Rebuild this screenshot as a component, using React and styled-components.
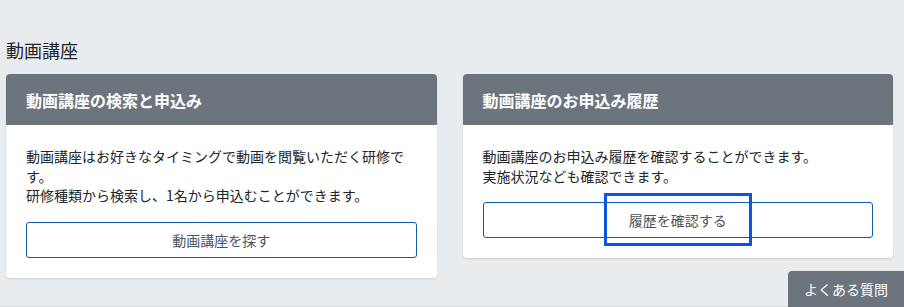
import React from 'react';
import styled, { createGlobalStyle } from 'styled-components';

const GlobalStyle = createGlobalStyle`
  html, body {
    margin: 0;
    padding: 0;
    background: #e9ecef;
  }
  body {
    font-family: 'Noto Sans CJK JP', 'Noto Sans', sans-serif;
    color: #212529;
  }
`;

const Page = styled.div`
  box-sizing: border-box;
  width: 904px;
  min-height: 307px;
  padding: 38px 11px 0 6px;
  border-bottom: 1px solid #d9dde1;
`;

const Heading = styled.h2`
  margin: 0 0 12px;
  font-size: 18px;
  font-weight: 400;
  line-height: 24px;
  color: #212529;
`;

const Cards = styled.div`
  display: grid;
  grid-template-columns: 1fr 1fr;
  column-gap: 26px;
  align-items: start;
`;

const Card = styled.section`
  background: #fff;
  border-radius: 4px;
  box-shadow: 0 1px 2px rgba(0, 0, 0, 0.12);
  overflow: hidden;
`;

const CardHeader = styled.div`
  display: flex;
  align-items: center;
  height: 51px;
  padding: 0 20px;
  background: #6c757d;
  color: #fff;
  font-size: 16px;
  font-weight: 700;
`;

const CardBody = styled.div`
  padding: 22px 20px 20px;
`;

const Text = styled.p`
  margin: 0 0 16px;
  font-size: 14px;
  line-height: 19.6px;
`;

const ButtonWrap = styled.div`
  position: relative;
`;

const OutlineButton = styled.button`
  box-sizing: border-box;
  width: 100%;
  height: 36px;
  background: #fff;
  border: 1px solid #0f5aa8;
  border-radius: 3px;
  color: #4a5562;
  font-family: inherit;
  font-size: 14px;
  cursor: pointer;
`;

const Highlight = styled.div`
  position: absolute;
  left: 121px;
  top: -9px;
  width: 148px;
  height: 53px;
  box-sizing: border-box;
  border: 3px solid #0b55e6;
  pointer-events: none;
`;

const FaqButton = styled.button`
  position: fixed;
  right: 0;
  top: 271px;
  height: 40px;
  padding: 0 16px 4px;
  background: #6c757d;
  border: none;
  border-radius: 4px 0 0 0;
  color: #fff;
  font-family: inherit;
  font-size: 14px;
  cursor: pointer;
`;

export default function App() {
  return (
    <>
      <GlobalStyle />
      <Page>
        <Heading>動画講座</Heading>
        <Cards>
          <Card>
            <CardHeader>動画講座の検索と申込み</CardHeader>
            <CardBody>
              <Text>
                動画講座はお好きなタイミングで動画を閲覧いただく研修です。
                <br />
                研修種類から検索し、1名から申込むことができます。
              </Text>
              <ButtonWrap>
                <OutlineButton>動画講座を探す</OutlineButton>
              </ButtonWrap>
            </CardBody>
          </Card>
          <Card>
            <CardHeader>動画講座のお申込み履歴</CardHeader>
            <CardBody>
              <Text>
                動画講座のお申込み履歴を確認することができます。
                <br />
                実施状況なども確認できます。
              </Text>
              <ButtonWrap>
                <OutlineButton>履歴を確認する</OutlineButton>
                <Highlight />
              </ButtonWrap>
            </CardBody>
          </Card>
        </Cards>
      </Page>
      <FaqButton>よくある質問</FaqButton>
    </>
  );
}
